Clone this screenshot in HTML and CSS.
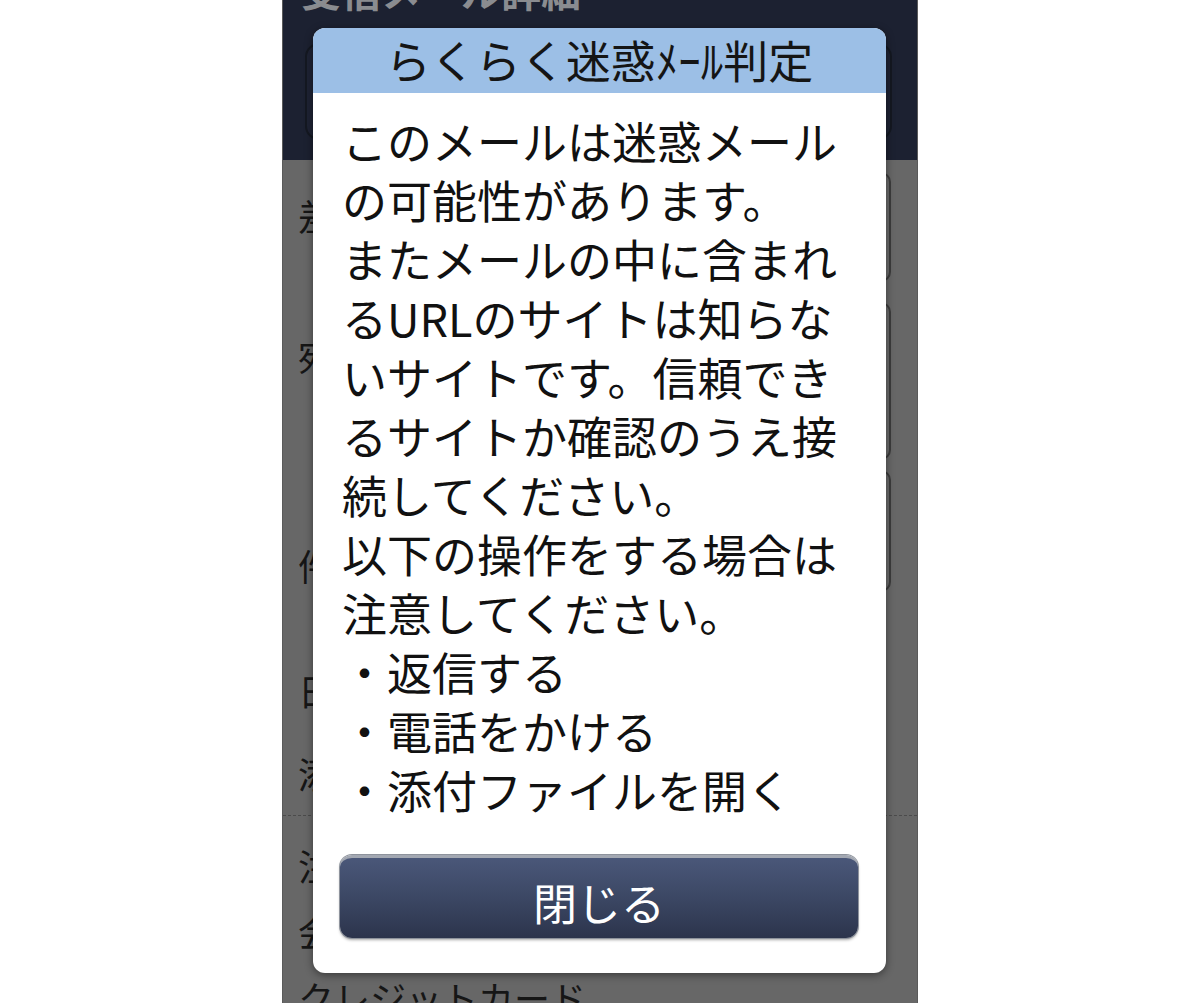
FILE: index.html
```html
<!DOCTYPE html>
<html lang="ja">
<head>
<meta charset="utf-8">
<title>らくらく迷惑メール判定</title>
<link rel="stylesheet" href="styles.css">
</head>
<body>
<div class="phone">
  <header class="appbar">
    <div class="apptitle">受信メール詳細</div>
    <div class="subjectbox"></div>
  </header>
  <section class="fields">
    <div class="labels">
      <div class="label l1">差出人</div>
      <div class="label l2">宛先</div>
      <div class="label l3">件名</div>
      <div class="label l4">日時</div>
      <div class="label l5">添付</div>
    </div>
    <div class="boxes">
      <div class="box b1"></div>
      <div class="box b2"></div>
      <div class="box b3"></div>
    </div>
  </section>
  <section class="mailbody">
    <p class="hidden-line">注文内容のご確認</p>
    <p class="hidden-line">会員情報の更新</p>
    <p>クレジットカード</p>
  </section>

  <div class="dialog">
    <div class="dialog-title">らくらく迷惑ﾒｰﾙ判定</div>
    <div class="dialog-text">
      このメールは迷惑メール<br>
      の可能性があります。<br>
      またメールの中に含まれ<br>
      るURLのサイトは知らな<br>
      いサイトです。信頼でき<br>
      るサイトか確認のうえ接<br>
      続してください。<br>
      以下の操作をする場合は<br>
      注意してください。<br>
      ・返信する<br>
      ・電話をかける<br>
      ・添付ファイルを開く
    </div>
    <button class="close-btn">閉じる</button>
  </div>
</div>
</body>
</html>
```
FILE: styles.css
```css
* { box-sizing: border-box; }
html, body { margin: 0; padding: 0; }
body {
  background: #ffffff;
  display: flex;
  justify-content: center;
  font-family: "Noto Sans CJK JP", "Noto Sans", sans-serif;
  height: 1003px;
  overflow: hidden;
}
.phone {
  position: relative;
  width: 636px;
  height: 1003px;
  background: #676767;
  overflow: hidden;
  border-left: 1px solid #5a5a5a;
  border-right: 1px solid #5a5a5a;
}
.appbar {
  height: 160px;
  background: #1c2131;
  padding: 0 25px 0 22px;
  display: flex;
  flex-direction: column;
}
.apptitle {
  margin-top: -30px;
  margin-left: -4px;
  font-size: 40px;
  line-height: 40px;
  color: #8a8c90;
  font-weight: 700;
  height: 40px;
}
.subjectbox {
  margin-top: 33px;
  height: 97px;
  border: 2px solid #141821;
  border-radius: 14px;
  background: #1e2334;
}
.fields {
  height: 655px;
  display: flex;
}
.labels {
  padding-left: 15px;
  width: 46px;
  overflow: hidden;
  display: flex;
  flex-direction: column;
}
.label {
  font-size: 36px;
  line-height: 40px;
  height: 40px;
  color: #161616;
  white-space: nowrap;
}
.l1 { margin-top: 35px; }
.l2 { margin-top: 100px; }
.l3 { margin-top: 170px; }
.l4 { margin-top: 85px; }
.l5 { margin-top: 43px; }
.boxes {
  margin-left: auto;
  margin-right: 26px;
  width: 490px;
  display: flex;
  flex-direction: column;
}
.box {
  border: 2px solid #3d3d3d;
  border-radius: 10px;
  background: #6a6a6a;
}
.b1 { margin-top: 12px; height: 110px; }
.b2 { margin-top: 20px; height: 158px; }
.b3 { margin-top: 10px; height: 122px; }
.mailbody {
  border-top: 1px dashed #4b4b4b;
  padding: 16px 0 0 15px;
}
.mailbody p {
  margin: 0;
  font-size: 36px;
  line-height: 66px;
  height: 66px;
  color: #161616;
  white-space: nowrap;
}
.mailbody .hidden-line {
  width: 31px;
  overflow: hidden;
}

/* Dialog overlay */
.dialog {
  position: absolute;
  top: 28px;
  left: 30px;
  width: 573px;
  height: 945px;
  background: #ffffff;
  border-radius: 12px;
  box-shadow: 0 2px 8px rgba(0,0,0,0.45);
  display: flex;
  flex-direction: column;
  overflow: hidden;
}
.dialog-title {
  height: 65px;
  background: #9cbfe6;
  color: #151515;
  font-size: 45px;
  line-height: 63px;
  text-align: center;
}
.dialog-text {
  padding: 18px 0 0 29px;
  font-size: 45px;
  line-height: 59px;
  color: #111111;
  white-space: nowrap;
}
.close-btn {
  margin: 36px 28px 0 27px;
  height: 83px;
  border: none;
  border-top: 3px solid #a3a8b2;
  border-radius: 12px;
  background: linear-gradient(to bottom, #4a5779 0%, #3d4966 45%, #2c344c 100%);
  box-shadow: 0 0 0 1px #8e939c, 0 2px 3px rgba(0,0,0,0.35);
  color: #ffffff;
  font-family: "Noto Sans CJK JP", "Noto Sans", sans-serif;
  font-size: 44px;
  line-height: 60px;
  padding: 8px 0 0 0;
  cursor: pointer;
}
```
